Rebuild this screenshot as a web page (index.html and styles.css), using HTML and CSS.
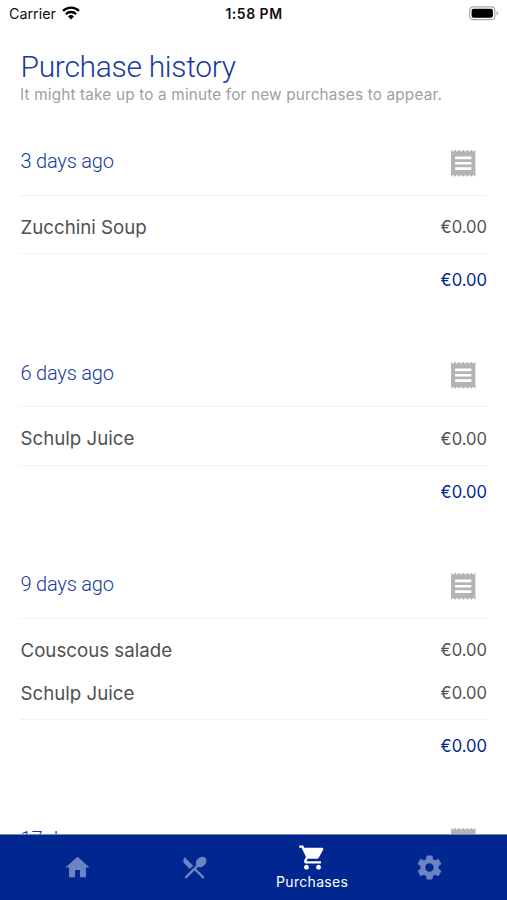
FILE: index.html
```html
<!DOCTYPE html>
<html lang="en">
<head>
<meta charset="utf-8">
<title>Purchase history</title>
<link rel="stylesheet" href="styles.css">
</head>
<body>
<svg class="defs" aria-hidden="true">
  <symbol id="receipt" viewBox="0 0 24 24"><path d="M18 17H6v-2h12v2zm0-4H6v-2h12v2zm0-4H6V7h12v2zM3 22l1.500-1.500L6 22l1.500-1.500L9 22l1.500-1.500L12 22l1.500-1.500L15 22l1.500-1.500L18 22l1.500-1.500L21 22V2l-1.500 1.500L18 2l-1.500 1.500L15 2l-1.500 1.500L12 2l-1.500 1.500L9 2 7.500 3.500 6 2 4.500 3.500 3 2v20z"/></symbol>
</svg>
<div class="app">
  <header class="status">
    <div class="carrier"><span class="carrier-name">Carrier</span>
      <svg class="wifi" viewBox="0 0 18 14"><g fill="none" stroke="#000" stroke-width="2.300"><path d="M1 4.900a11.500 11.500 0 0 1 16 0"/><path d="M3.900 8.100a7.300 7.300 0 0 1 10.200 0"/></g><path d="M9 13.500 6 10.400a4.300 4.300 0 0 1 6 0z"/></svg>
    </div>
    <div class="time">1:58 PM</div>
    <svg class="battery" viewBox="0 0 31 15"><rect x=".7" y=".7" width="26" height="13.200" rx="3.600" fill="#fff" stroke="#aaa" stroke-width="1.300"/><rect x="2.700" y="2.700" width="22" height="9.200" rx="2"/><path d="M28.500 5v4.600c2.300-.8 2.300-3.800 0-4.600z" fill="#aaa"/></svg>
  </header>
  <main class="content">
    <h1 class="title">Purchase history</h1>
    <p class="subtitle">It might take up to a minute for new purchases to appear.</p>
    <section class="order">
      <div class="head"><h2 class="day">3 days ago</h2><svg class="receipt"><use href="#receipt"/></svg></div>
      <div class="items"><div class="item"><span class="name">Zucchini Soup</span><span class="price">€0.00</span></div></div>
      <div class="total price">€0.00</div>
    </section>
    <section class="order">
      <div class="head"><h2 class="day">6 days ago</h2><svg class="receipt"><use href="#receipt"/></svg></div>
      <div class="items"><div class="item"><span class="name">Schulp Juice</span><span class="price">€0.00</span></div></div>
      <div class="total price">€0.00</div>
    </section>
    <section class="order">
      <div class="head"><h2 class="day">9 days ago</h2><svg class="receipt"><use href="#receipt"/></svg></div>
      <div class="items">
        <div class="item"><span class="name">Couscous salade</span><span class="price">€0.00</span></div>
        <div class="item"><span class="name">Schulp Juice</span><span class="price">€0.00</span></div>
      </div>
      <div class="total price">€0.00</div>
    </section>
    <section class="order">
      <div class="head"><h2 class="day">17 days ago</h2><svg class="receipt"><use href="#receipt"/></svg></div>
    </section>
  </main>
  <nav class="tabs">
    <a class="tab"><svg class="tab-icon" viewBox="0 0 24 24"><path d="M10 20v-6h4v6h5v-8h3L12 3 2 12h3v8z"/></svg></a>
    <a class="tab"><svg class="tab-icon" viewBox="0 0 24 24"><path d="m8.100 13.340 2.830-2.830L3.910 3.500a4.008 4.008 0 0 0 0 5.660l4.190 4.180zm6.780-1.810c1.530.71 3.680.21 5.270-1.380 1.910-1.910 2.280-4.650.81-6.120-1.460-1.460-4.200-1.100-6.120.81-1.590 1.590-2.090 3.740-1.380 5.270L3.700 19.870l1.410 1.410L12 14.410l6.880 6.880 1.410-1.410L13.410 13l1.470-1.470z"/></svg></a>
    <a class="tab active"><svg class="tab-icon" viewBox="0 0 24 24"><path d="M7 18c-1.100 0-1.990.9-1.990 2S5.900 22 7 22s2-.9 2-2-.9-2-2-2zM1 2v2h2l3.600 7.590-1.350 2.450c-.16.28-.25.61-.25.960 0 1.100.9 2 2 2h12v-2H7.420c-.14 0-.25-.11-.25-.25l.03-.12.900-1.630h7.450c.75 0 1.410-.41 1.750-1.030l3.580-6.490A1 1 0 0 0 20 4H5.210l-.94-2H1zm16 16c-1.100 0-1.990.9-1.990 2s.89 2 1.990 2 2-.9 2-2-.9-2-2-2z"/></svg><span class="tab-label">Purchases</span></a>
    <a class="tab"><svg class="tab-icon" viewBox="0 0 24 24"><path d="M19.430 12.980c.04-.32.070-.64.070-.98s-.03-.66-.07-.98l2.110-1.650c.19-.15.240-.42.120-.64l-2-3.460c-.12-.22-.39-.3-.61-.22l-2.490 1c-.52-.4-1.080-.73-1.690-.98l-.38-2.650A.488.488 0 0 0 14 2h-4c-.25 0-.46.180-.49.420l-.38 2.650c-.61.250-1.170.590-1.690.98l-2.490-1c-.23-.09-.49 0-.61.220l-2 3.460c-.13.220-.07.490.12.640l2.110 1.650c-.04.320-.07.650-.07.980s.03.660.07.980l-2.110 1.650c-.19.150-.24.420-.12.640l2 3.460c.12.220.39.300.61.220l2.490-1c.52.400 1.080.730 1.690.98l.38 2.650c.03.240.24.420.49.420h4c.25 0 .46-.18.490-.42l.38-2.650c.61-.25 1.170-.59 1.690-.98l2.490 1c.23.090.49 0 .61-.22l2-3.460c.12-.22.070-.49-.12-.64l-2.110-1.650zM12 15.500c-1.930 0-3.500-1.570-3.500-3.500s1.570-3.500 3.500-3.500 3.500 1.570 3.500 3.500-1.570 3.500-3.500 3.500z"/></svg></a>
  </nav>
</div>
</body>
</html>
```

FILE: styles.css
```css
* { box-sizing: border-box; }
body { margin: 0; background: #fff; font-family: Inter, "Liberation Sans", sans-serif; }
.defs { display: none; }
.app { height: 900px; display: flex; flex-direction: column; overflow: hidden; }
.status { flex: none; height: 27px; padding: 0 8px 0 9px; display: grid; grid-template-columns: 1fr auto 1fr; align-items: center; color: #111; }
.carrier { display: flex; align-items: center; gap: 6px; font-size: 14.300px; }
.wifi { width: 18px; height: 14px; margin-top: -2px; }
.time { font-size: 14px; font-weight: 600; letter-spacing: .5px; }
.battery { justify-self: end; width: 30px; height: 15px; margin-top: -1px; }
.content { flex: 1; min-height: 0; overflow: hidden; padding: 22px 20px 0; }
.title { margin: 0 0 0 .5px; font: 300 30px/36px Roboto, sans-serif; letter-spacing: -.3px; color: #193b9c; }
.subtitle { margin: 0 0 26px; font-size: 15.300px; letter-spacing: .18px; line-height: 19px; color: #a0a0a0; white-space: nowrap; }
.order { padding-bottom: 49.500px; }
.head { height: 65.500px; padding-right: 8px; display: flex; justify-content: space-between; align-items: center; border-bottom: 1px solid #f2f2f2; }
.day { margin: 0 0 2px .5px; font: 300 20px/24px Roboto, sans-serif; letter-spacing: -.2px; color: #173a9f; }
.receipt { width: 32.500px; height: 32.500px; margin-top: 2px; fill: #b3b3b3; }
.items { padding: 10px 0 4.500px; border-bottom: 1px solid #f2f2f2; }
.item { height: 43px; display: flex; justify-content: space-between; align-items: center; color: #505050; }
.name { margin-left: .5px; font-size: 18.700px; }
.price { font-size: 16.600px; }
.total { margin-top: 14px; height: 24px; line-height: 24px; text-align: right; color: #00268f; }
.tabs { flex: none; height: 66px; padding: 0 19px; display: flex; background: #00268f; border-top: 1px solid #7186c2; }
.tab { flex: 1; display: flex; flex-direction: column; align-items: center; justify-content: center; color: #6c83c4; }
.tab-icon { width: 29px; height: 29px; fill: currentColor; }
.active { color: #fff; padding-bottom: 1px; }
.tab-label { margin-top: 1px; font-size: 14px; letter-spacing: .3px; line-height: 18px; }
```
